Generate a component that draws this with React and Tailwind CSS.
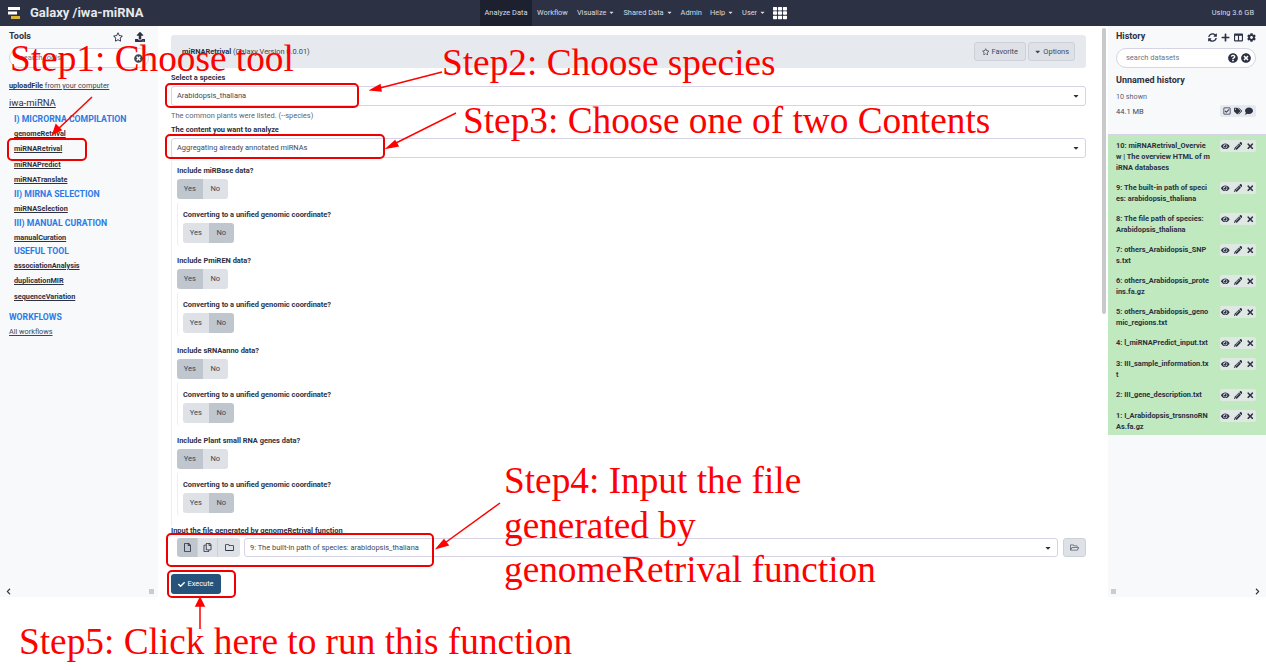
import {
  FaRegStar, FaUpload, FaTimesCircle, FaSyncAlt, FaPlus, FaColumns, FaCog, FaQuestionCircle,
  FaRegCheckSquare, FaTags, FaComment, FaEye, FaPencilAlt, FaTimes, FaCheck, FaRegFile,
  FaRegCopy, FaRegFolder, FaRegFolderOpen, FaChevronLeft, FaChevronRight, FaCaretDown, FaTh,
} from "react-icons/fa";

const tools = [
  { kind: "upload" },
  { kind: "head", text: "iwa-miRNA", h: "h-[18px]" },
  { kind: "section", text: "I) MICRORNA COMPILATION", h: "h-[15px]" },
  { kind: "tool", text: "genomeRetrival", h: "h-[15px]" },
  { kind: "tool", text: "miRNARetrival", h: "h-[15px]" },
  { kind: "tool", text: "miRNAPredict", h: "h-[16px]" },
  { kind: "tool", text: "miRNATranslate", h: "h-[15px]" },
  { kind: "section", text: "II) MIRNA SELECTION", h: "h-[14px]" },
  { kind: "tool", text: "miRNASelection", h: "h-[15px]" },
  { kind: "section", text: "III) MANUAL CURATION", h: "h-[14px]" },
  { kind: "tool", text: "manualCuration", h: "h-[14px]" },
  { kind: "section", text: "USEFUL TOOL", h: "h-[14px]" },
  { kind: "tool", text: "associationAnalysis", h: "h-[15px]" },
  { kind: "tool", text: "duplicationMIR", h: "h-[15px]" },
  { kind: "tool", text: "sequenceVariation", h: "h-[16px]" },
];

const historyItems = [
  "10: miRNARetrival_Overvie\nw | The overview HTML of m\niRNA databases",
  "9: The built-in path of speci\nes: arabidopsis_thaliana",
  "8: The file path of species:\nArabidopsis_thaliana",
  "7: others_Arabidopsis_SNP\ns.txt",
  "6: others_Arabidopsis_prote\nins.fa.gz",
  "5: others_Arabidopsis_geno\nmic_regions.txt",
  "4: l_miRNAPredict_input.txt",
  "3: III_sample_information.tx\nt",
  "2: III_gene_description.txt",
  "1: I_Arabidopsis_trsnsnoRN\nAs.fa.gz",
];

const dataSources = ["miRBase", "PmiREN", "sRNAanno", "Plant small RNA genes"];

function YesNo({ active, className }) {
  const on = "bg-[#bfc6ce]";
  const off = "bg-[#dee1e6]";
  return (
    <div className={`flex h-[20px] w-[51px] rounded-[3px] overflow-hidden text-[7.5px] text-[#3f4656] ${className}`}>
      <div className={`flex-1 flex items-center justify-center ${active === "yes" ? on : off}`}>Yes</div>
      <div className={`flex-1 flex items-center justify-center ${active === "no" ? on : off}`}>No</div>
    </div>
  );
}

function SelectBox({ text, className }) {
  return (
    <div className={`flex items-center justify-between h-[20px] border border-[#d6d4e4] rounded-[3px] bg-white pl-[5px] pr-[5px] text-[7.45px] text-[#3f4656] ${className}`}>
      <span>{text}</span>
      <FaCaretDown className="text-[8px] text-[#2c3143]" />
    </div>
  );
}

function Label({ children, className = "" }) {
  return <div className={`text-[7.45px] font-bold text-[#2c3143] leading-[10px] ${className}`}>{children}</div>;
}

function DataOption({ name }) {
  return (
    <div className="h-[90px]">
      <Label>Include {name} data?</Label>
      <YesNo active="yes" className="mt-[3px]" />
      <div className="mt-[3px] pl-[5px] border-l border-[#eceef1] rounded-l-[3px] h-[44px] pt-[8px]">
        <Label>Converting to a unified genomic coordinate?</Label>
        <YesNo active="no" className="mt-[3px]" />
      </div>
    </div>
  );
}

function ToolPanel() {
  return (
    <aside className="w-[158px] bg-[#f8f9fb] h-[571px] shrink-0 relative pl-[9px] pt-[5px]">
      <div className="flex items-center justify-between h-[12px] pr-[13px]">
        <span className="text-[9px] font-bold text-[#2c3143]">Tools</span>
        <div className="flex items-center gap-[12px] text-[10px] text-[#2c3143]">
          <FaRegStar />
          <FaUpload />
        </div>
      </div>
      <div className="mt-[5px] mr-[9px] h-[20px] rounded-full border border-[#d6d4e4] bg-white flex items-center justify-between pl-[10px] pr-[5px] text-[7.5px] text-[#6d7585]">
        <span>search tools</span>
        <FaTimesCircle className="text-[9px] text-[#3f4656]" />
      </div>
      <div className="mt-[11px] text-[7.3px] text-[#3f4656]">
        {tools.map((t) => {
          if (t.kind === "upload")
            return (
              <div key="upload" className="h-[15px] flex items-center">
                <span className="underline"><b className="text-[#2c3143]">uploadFile</b> from your computer</span>
              </div>
            );
          if (t.kind === "head")
            return <div key={t.text} className={`${t.h} flex items-center text-[9.5px] underline text-[#2c3143]`}>{t.text}</div>;
          if (t.kind === "section")
            return <div key={t.text} className={`${t.h} flex items-center pl-[5px] text-[8.7px] font-bold text-[#2c7be5]`}>{t.text}</div>;
          return <div key={t.text} className={`${t.h} flex items-center pl-[5px] font-bold underline text-[#2c3143]`}>{t.text}</div>;
        })}
        <div className="mt-[5px] h-[16px] flex items-center text-[8.7px] font-bold text-[#2c7be5]">WORKFLOWS</div>
        <div className="mt-[1px] underline">All workflows</div>
      </div>
      <FaChevronLeft className="absolute left-[5px] bottom-[2px] text-[7px] text-[#2c3143]" />
      <div className="absolute right-[4px] bottom-[3px] w-[5px] h-[5px] bg-[#c9ccd2]" />
    </aside>
  );
}

function CenterPanel() {
  return (
    <main className="flex-1 h-[571px] pl-[13px] pr-[22px] pt-[9px] relative">
      <div className="h-[33px] rounded-[3px] bg-[#e6e9ed] flex items-center justify-between pl-[11px] pr-[11px]">
        <span className="text-[7.45px] text-[#3f4656]"><b className="text-[#2c3143]">miRNARetrival</b> (Galaxy Version 0.0.01)</span>
        <div className="flex gap-[2px] text-[7.45px] text-[#3f4656]">
          <div className="h-[19px] w-[52px] rounded-[3px] bg-[#dee1e6] border border-[#cdd0d8] flex items-center justify-center gap-[2px]"><FaRegStar />Favorite</div>
          <div className="h-[19px] w-[47px] rounded-[3px] bg-[#dee1e6] border border-[#cdd0d8] flex items-center justify-center gap-[2px]"><FaCaretDown />Options</div>
        </div>
      </div>
      <Label className="mt-[5px]">Select a species</Label>
      <SelectBox text="Arabidopsis_thaliana" className="mt-[3px]" />
      <div className="h-[10px] mt-[5px] text-[7.45px] leading-[10px] text-[#5c6474]">The common plants were listed. (--species)</div>
      <Label className="mt-[4px]">The content you want to analyze</Label>
      <SelectBox text="Aggregating already annotated miRNAs" className="mt-[3px]" />
      <div className="mt-[3px] pl-[5px] border-l border-[#eceef1] pt-[5px]">
        {dataSources.map((name) => <DataOption key={name} name={name} />)}
      </div>
      <Label>Input the file generated by genomeRetrival function</Label>
      <div className="mt-[2px] flex items-center">
        <div className="ml-[6px] flex h-[19px] rounded-[3px] overflow-hidden text-[9px] text-[#2c3143]">
          <div className="w-[20px] bg-[#bfc6ce] flex items-center justify-center"><FaRegFile /></div>
          <div className="w-[21px] bg-[#dee1e6] flex items-center justify-center border-x border-[#cdd0d8]"><FaRegCopy /></div>
          <div className="w-[22px] bg-[#dee1e6] flex items-center justify-center"><FaRegFolder /></div>
        </div>
        <SelectBox text="9: The built-in path of species: arabidopsis_thaliana" className="ml-[4px] flex-1 !h-[19px]" />
        <div className="ml-[5px] w-[23px] h-[19px] rounded-[3px] bg-[#dee1e6] border border-[#cdd0d8] flex items-center justify-center text-[9px] text-[#5c6474]"><FaRegFolderOpen /></div>
      </div>
      <button className="mt-[17px] w-[50px] h-[20px] rounded-[3px] bg-[#25537b] text-white text-[7.45px] flex items-center justify-center gap-[2px]">
        <FaCheck className="text-[7px]" />Execute
      </button>
      <div className="absolute right-[2px] top-[2px] w-[4px] h-[286px] rounded bg-[#c8c9cb]" />
    </main>
  );
}

function HistoryPanel() {
  return (
    <aside className="w-[158px] bg-[#f8f9fb] h-[571px] shrink-0 relative">
      <div className="h-[108px] pl-[8px] pr-[10px] pt-[5px] text-[#2c3143]">
        <div className="flex items-center justify-between h-[12px]">
          <span className="text-[9px] font-bold">History</span>
          <div className="flex items-center gap-[4px] text-[9px]"><FaSyncAlt /><FaPlus /><FaColumns /><FaCog /></div>
        </div>
        <div className="mt-[5px] h-[20px] rounded-full border border-[#d6d4e4] bg-white flex items-center justify-between pl-[9px] pr-[4px] text-[7.5px] text-[#6d7585]">
          <span>search datasets</span>
          <div className="flex gap-[3px] text-[10px] text-[#2c3143]"><FaQuestionCircle /><FaTimesCircle /></div>
        </div>
        <div className="mt-[6px] text-[9px] font-bold leading-[12px]">Unnamed history</div>
        <div className="mt-[6px] text-[7.2px] leading-[10px] text-[#5c6474]">10 shown</div>
        <div className="mt-[2px] flex items-center justify-between">
          <span className="text-[7.5px] mt-[2px] text-[#3f4656]">44.1 MB</span>
          <div className="w-[36px] h-[12px] bg-[#e6e9ed] rounded-[2px] flex items-center justify-center gap-[3px] text-[8px]"><FaRegCheckSquare /><FaTags /><FaComment /></div>
        </div>
      </div>
      <div className="bg-[#c1e9c0] border-t border-[#d6d4e4] pt-[5px] pb-[4px] h-[301px]">
        {historyItems.map((item) => (
          <div key={item} className="flex justify-between pl-[8px] pr-[10px] pb-[9px]">
            <div className="text-[7.4px] font-bold leading-[11px] text-[#2c3143] whitespace-pre">{item}</div>
            <div className="w-[36px] h-[12px] bg-[#dfe8e3] rounded-[2px] flex items-center justify-center gap-[4px] text-[8.5px] text-[#2c3143] shrink-0">
              <FaEye /><FaPencilAlt /><FaTimes />
            </div>
          </div>
        ))}
      </div>
      <FaChevronRight className="absolute right-[5px] bottom-[2px] text-[7px] text-[#2c3143]" />
      <div className="absolute left-[3px] bottom-[3px] w-[5px] h-[5px] bg-[#c9ccd2]" />
    </aside>
  );
}

function Annotations() {
  const step = "absolute font-['Liberation_Serif',serif] text-[37.3px] leading-[44.5px] text-[#ff0000] whitespace-nowrap";
  const box = "absolute border-2 border-[#ee0000] rounded-[5px]";
  return (
    <>
      <div className={`${step} left-[10px] top-[37px]`}>Step1: Choose tool</div>
      <div className={`${step} left-[442px] top-[41px]`}>Step2: Choose species</div>
      <div className={`${step} left-[463px] top-[99px]`}>Step3: Choose one of two Contents</div>
      <div className={`${step} left-[504px] top-[459px]`}>Step4: Input the file<br />generated by<br />genomeRetrival function</div>
      <div className={`${step} left-[19px] top-[620px]`}>Step5: Click here to run this function</div>
      <div className={`${box} left-[7px] top-[138px] w-[80px] h-[23px]`} />
      <div className={`${box} left-[165px] top-[83px] w-[194px] h-[25px]`} />
      <div className={`${box} left-[165px] top-[134px] w-[220px] h-[25px]`} />
      <div className={`${box} left-[166px] top-[533px] w-[268px] h-[34px]`} />
      <div className={`${box} left-[167px] top-[570px] w-[69px] h-[28px]`} />
      <svg className="absolute left-0 top-0 pointer-events-none" width="1266" height="670" fill="none" stroke="#ff0000" strokeWidth="1.5">
        <path d="M92 97 L56 131" />
        <path d="M53 134 L56 125 L61 130 Z" fill="#ff0000" />
        <path d="M442 72 L376 89" />
        <path d="M371 90 L380 85 L381 91 Z" fill="#ff0000" />
        <path d="M456 113 L392 145" />
        <path d="M387 148 L395 141 L398 146 Z" fill="#ff0000" />
        <path d="M500 503 L442 545" />
        <path d="M437 548 L444 540 L448 545 Z" fill="#ff0000" />
        <path d="M200 629 L200 604" />
        <path d="M200 598 L196 606 L204 606 Z" fill="#ff0000" />
      </svg>
    </>
  );
}

export default function App() {
  return (
    <div className="relative w-[1266px] h-[670px] bg-white overflow-hidden font-['Roboto',sans-serif]">
      <header className="h-[26px] bg-[#2c3143] flex items-center text-white">
        <div className="w-[30px] pl-[8px] shrink-0">
          <svg width="14" height="14" viewBox="0 0 14 14">
            <rect x="0" y="1" width="12" height="3" fill="#fff" />
            <rect x="0" y="5.5" width="9" height="3" fill="#fff" />
            <rect x="3" y="10" width="9" height="3" fill="#d9b33a" />
          </svg>
        </div>
        <span className="w-[450px] shrink-0 text-[13px] font-bold text-[#e6e9ed]">Galaxy /iwa-miRNA</span>
        <nav className="h-full flex items-center text-[7.4px] text-[#d8dbe2]">
          <span className="h-full w-[52px] bg-[#1d212f] flex items-center justify-center">Analyze Data</span>
          <span className="ml-[5px]">Workflow</span>
          <span className="ml-[9px] flex items-center gap-[2px]">Visualize<FaCaretDown className="text-[7px]" /></span>
          <span className="ml-[8px] flex items-center gap-[2px]">Shared Data<FaCaretDown className="text-[7px]" /></span>
          <span className="ml-[8px]">Admin</span>
          <span className="ml-[8px] flex items-center gap-[2px]">Help<FaCaretDown className="text-[7px]" /></span>
          <span className="ml-[8px] flex items-center gap-[2px]">User<FaCaretDown className="text-[7px]" /></span>
          <FaTh className="ml-[7px] text-[14px] text-white" />
        </nav>
        <span className="ml-auto pr-[12px] text-[7.4px] text-[#d8dbe2]">Using 3.6 GB</span>
      </header>
      <div className="flex">
        <ToolPanel />
        <CenterPanel />
        <HistoryPanel />
      </div>
      <Annotations />
    </div>
  );
}
